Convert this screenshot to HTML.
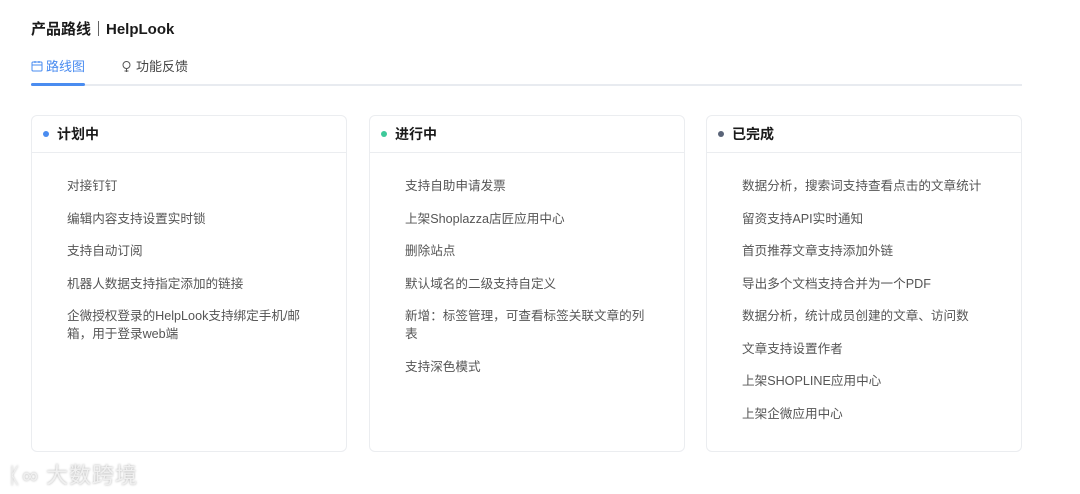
<!DOCTYPE html>
<html><head><meta charset="utf-8"><style>
*{margin:0;padding:0;box-sizing:border-box}
body{width:1080px;height:494px;background:#fff;font-family:"Liberation Sans","Noto Sans CJK SC",sans-serif;position:relative;overflow:hidden;color:#333}
.title{position:absolute;left:31px;top:18px;font-size:15px;font-weight:bold;color:#1a1a1a}
.tabs{position:absolute;left:31px;top:58px;width:991px;height:28px;border-bottom:2px solid #e8ebf0}
.tab{position:absolute;top:0;font-size:13px;line-height:18px}
.t1{left:0;color:#4a8cf0}
.t2{left:90px;color:#444}
.ul{position:absolute;left:0;top:25px;width:54px;height:3px;background:#4a8cf0;border-radius:2px}
.card{position:absolute;top:115px;width:316px;height:337px;border:1px solid #ebedf0;border-radius:6px}
.hd{height:37px;border-bottom:1px solid #ebedf0;font-size:14px;font-weight:bold;color:#1a1a1a;line-height:36px;padding-left:25px;position:relative}
.hd i{position:absolute;left:11px;top:15px;width:6px;height:6px;border-radius:50%}
.items{padding:24px 0 0 35px;padding-right:34px}
.items div{font-size:12.6px;color:#555;line-height:18px;margin-bottom:14.5px}
.wm{position:absolute;left:8px;top:458px;font-size:22px;color:#f0f0f0;text-shadow:0 0 2px #aaa;letter-spacing:1px}
</style></head><body>
<div class="title">产品路线｜HelpLook</div>
<div class="tabs">
<div class="tab t1"><svg width="12" height="12" viewBox="0 0 12 12" style="vertical-align:-1px;margin-right:3px"><rect x="1" y="2" width="10" height="9" rx="1" fill="none" stroke="#4a8cf0"/><path d="M1 5h10M4 1v2M8 1v2" stroke="#4a8cf0"/></svg>路线图</div>
<div class="tab t2"><svg width="11" height="13" viewBox="0 0 11 13" style="vertical-align:-2px;margin-right:4px"><circle cx="5.5" cy="5" r="3.5" fill="none" stroke="#555"/><path d="M5.5 8.5v3.5M3.5 11h4" stroke="#555"/></svg>功能反馈</div>
<div class="ul"></div>
</div>
<div class="card" style="left:31px"><div class="hd"><i style="background:#4a8cf0"></i>计划中</div><div class="items">
<div>对接钉钉</div><div>编辑内容支持设置实时锁</div><div>支持自动订阅</div><div>机器人数据支持指定添加的链接</div><div>企微授权登录的HelpLook支持绑定手机/邮箱，用于登录web端</div></div></div>
<div class="card" style="left:369px"><div class="hd"><i style="background:#3ec99a"></i>进行中</div><div class="items">
<div>支持自助申请发票</div><div>上架Shoplazza店匠应用中心</div><div>删除站点</div><div>默认域名的二级支持自定义</div><div>新增：标签管理，可查看标签关联文章的列表</div><div>支持深色模式</div></div></div>
<div class="card" style="left:706px"><div class="hd"><i style="background:#5a6478"></i>已完成</div><div class="items">
<div>数据分析，搜索词支持查看点击的文章统计</div><div>留资支持API实时通知</div><div>首页推荐文章支持添加外链</div><div>导出多个文档支持合并为一个PDF</div><div>数据分析，统计成员创建的文章、访问数</div><div>文章支持设置作者</div><div>上架SHOPLINE应用中心</div><div>上架企微应用中心</div></div></div>
<div class="wm">ᛕ∞ 大数跨境</div>
</body></html>
